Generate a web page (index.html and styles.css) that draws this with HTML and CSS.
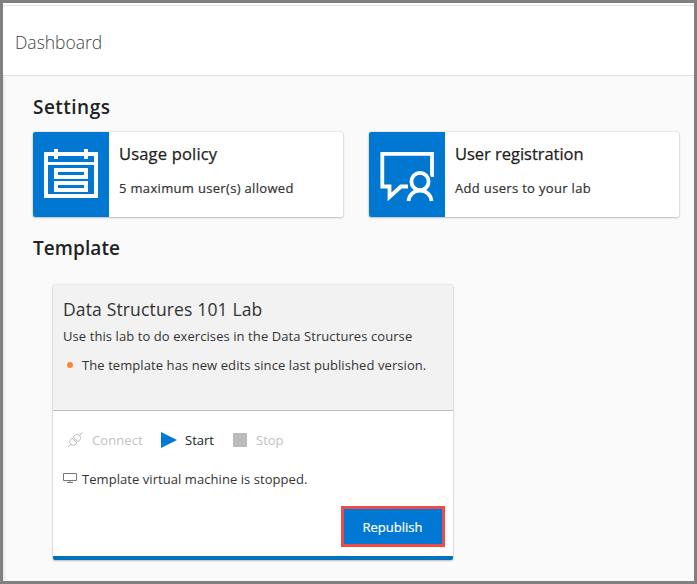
FILE: index.html
```html
<!DOCTYPE html>
<html lang="en">
<head>
<meta charset="utf-8">
<title>Dashboard</title>
<link rel="stylesheet" href="styles.css">
</head>
<body>
<div class="frame">
  <header class="topbar"><h1>Dashboard</h1></header>
  <main>
    <h2 class="settings">Settings</h2>
    <section class="tiles">
      <article class="tile">
        <div class="tile-icon">
          <svg width="76" height="85" viewBox="0 0 76 85" fill="none" stroke="#fff" stroke-width="4">
            <path d="M13 22H63V64H13Z"/>
            <path d="M13 31.500H63" stroke-width="3"/>
            <path d="M23 17V27M53 17V27"/>
            <path d="M23 38H53V45H23ZM23 51H53V58H23Z"/>
          </svg>
        </div>
        <div class="tile-text">
          <h3 class="usage">Usage policy</h3>
          <p class="limit">5 maximum user(s) allowed</p>
        </div>
      </article>
      <article class="tile">
        <div class="tile-icon">
          <svg width="76" height="85" viewBox="0 0 76 85" fill="none" stroke="#fff" stroke-width="3.8">
            <path d="M39 54.500H32L20.500 65V54.500H13.300V21.900H63V45"/>
            <circle cx="51" cy="49.5" r="12" fill="#0078d1" stroke="none"/>
            <circle cx="51" cy="49.5" r="8.6"/>
            <path d="M39.500 69C40.200 62.500 45 58.600 51 58.600S61.800 62.500 62.500 69"/>
          </svg>
        </div>
        <div class="tile-text">
          <h3>User registration</h3>
          <p>Add users to your lab</p>
        </div>
      </article>
    </section>
    <h2 class="second">Template</h2>
    <section class="lab">
      <div class="lab-head">
        <h3>Data Structures 101 Lab</h3>
        <p>Use this lab to do exercises in the Data Structures course</p>
        <p class="notice"><i class="dot"></i>The template has new edits since last published version.</p>
      </div>
      <div class="lab-body">
        <div class="actions">
          <div class="action connect disabled">
            <svg width="16" height="16" viewBox="0 0 16 16" fill="none" stroke="#b8b8b8">
              <path d="M1 15L4 12M12.500 3.500L15.500 .5M4 12.300C1.800 10.200 2.600 8.200 5 6L10 11C7.700 13.400 5.900 14 4 12.300ZM6.200 4.900C8.500 2.500 10.600 1.700 12.500 3.600C14.300 5.400 13.500 7.500 11.200 9.900ZM6.500 7.600L8 6.300M8.400 9.500L9.700 8.100"/>
            </svg>
            <span>Connect</span>
          </div>
          <div class="action start">
            <svg width="16" height="16" viewBox="0 0 16 16"><path d="M0 0L16 8L0 16Z" fill="#0078d4"/></svg>
            <span>Start</span>
          </div>
          <div class="action stop disabled">
            <i class="square"></i>
            <span>Stop</span>
          </div>
        </div>
        <div class="status">
          <svg width="14" height="11" viewBox="0 0 14 11" fill="none" stroke="#777"><path d="M.5 1.500H13.500V8.500H.5ZM7 8.500V10.500M4 10.500H10"/></svg>
          <span>Template virtual machine is stopped.</span>
        </div>
        <button type="button">Republish</button>
      </div>
    </section>
  </main>
</div>
</body>
</html>
```
FILE: styles.css
```css
* { box-sizing: border-box; }
body, h1, h2, h3, p { margin: 0; white-space: nowrap; }
body {
  font-family: "Open Sans", "Noto Sans", sans-serif;
  color: #222;
  font-size: 13px;
}
svg { display: block; flex: none; }
.frame {
  width: 697px;
  height: 584px;
  border: 3px solid #808080;
  background: #fafafa;
  padding-top: 2px;
  overflow: hidden;
  box-shadow: inset 0 2px #fff;
}
.topbar {
  height: 71px;
  border-top: 1px solid #e2e2e2;
  border-bottom: 1px solid #e0e0e0;
  background: #fff;
  padding: 23px 12px 0;
}
h1 { font-size: 17.5px; line-height: 26px; font-weight: 300; color: #444; }
main {
  height: 505px;
  padding: 17px 0 0 30px;
  box-shadow: inset 3px 0 3px -2px #ddd;
}
h2 { font-size: 19px; line-height: 28px; font-weight: 600; height: 39px; }
.settings { letter-spacing: .48px; }
h2.second { margin-top: 17px; height: 51px; letter-spacing: .08px; }
.tiles { display: flex; gap: 26px; }
.tile {
  display: flex;
  width: 310px;
  height: 85px;
  background: #fff;
  border-radius: 2px;
  box-shadow: 0 0 2px rgba(0,0,0,.24), 0 1px 2px rgba(0,0,0,.18);
  overflow: hidden;
}
.tile-icon { width: 76px; background: #0078d1; flex: none; }
.tile-text { padding: 10px 0 0 10px; }
.tile h3 { font-size: 16.5px; font-weight: 400; line-height: 24px; letter-spacing: -.03px; -webkit-text-stroke: .25px #222; }
.tile .usage { letter-spacing: .18px; }
.tile p { font-size: 13px; line-height: 20px; margin-top: 12px; letter-spacing: .33px; color: #333; -webkit-text-stroke: .2px #333; }
.lab {
  width: 400px;
  height: 275px;
  margin-left: 20px;
  border-bottom: 4px solid #0072b8;
  border-radius: 2px;
  background: #fff;
  box-shadow: 0 0 2px rgba(0,0,0,.24), 0 1px 2px rgba(0,0,0,.18);
}
.lab-head {
  height: 126px;
  border-bottom: 1px solid #bfbfbf;
  background: #f2f2f2;
  padding: 10px 10px 0;
}
.lab-head h3 { font-size: 17.5px; line-height: 28px; font-weight: 400; letter-spacing: .15px; color: #333; }
.lab-head p { font-size: 13px; line-height: 20px; margin-top: 3px; letter-spacing: .08px; color: #333; }
.lab-head .notice { display: flex; align-items: center; margin-top: 9px; }
.dot { flex: none; width: 6px; height: 6px; border-radius: 50%; background: #ff8533; margin: 0 9px 0 4px; }
.lab-body { display: flex; flex-direction: column; height: 145px; padding: 19px 8px 9px 10px; }
.actions { display: flex; height: 20px; }
.action { display: flex; align-items: center; gap: 8px; font-size: 13px; line-height: 20px; }
.connect { width: 98px; padding-left: 4px; gap: 9px; letter-spacing: .1px; }
.start { width: 72px; }
.disabled { color: #c2c2c2; }
.square { width: 14px; height: 14px; background: #bcbcbc; margin-right: 1px; }
.status { display: flex; align-items: center; gap: 5px; height: 20px; margin-top: 19px; font-size: 13px; line-height: 20px; letter-spacing: .06px; color: #333; }
.status svg { margin-bottom: 3px; }
button {
  align-self: flex-end;
  width: 104px;
  height: 41px;
  margin-top: auto;
  padding: 0 1px 0 0;
  border: 3px solid #ef4a45;
  background: #0078d4;
  color: #fff;
  font: 400 13px/20px "Open Sans", "Noto Sans", sans-serif;
  -webkit-text-stroke: .2px #fff;
}
```
